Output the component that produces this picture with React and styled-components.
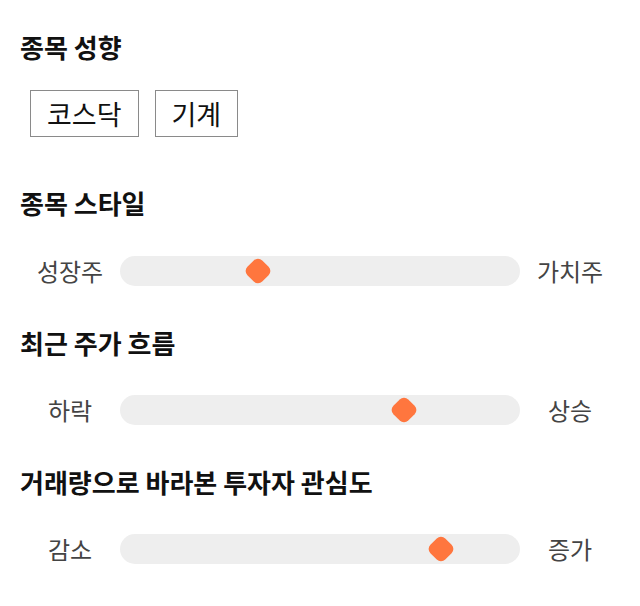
import styled, { createGlobalStyle } from 'styled-components';

const GlobalStyle = createGlobalStyle`
  body {
    margin: 0;
    background: #ffffff;
    font-family: "Noto Sans CJK KR", "Noto Sans", sans-serif;
  }
`;

const Page = styled.main`
  padding: 32px 20px 20px;
  display: flex;
  flex-direction: column;
`;

const Section = styled.section`
  margin-bottom: ${(p) => p.$gap || 42}px;
`;

const Title = styled.h2`
  margin: 0 0 ${(p) => p.$space || 38}px;
  font-size: 26px;
  line-height: 30px;
  font-weight: 700;
  color: #111111;
`;

const Chips = styled.div`
  display: flex;
  gap: 16px;
  padding-left: 10px;
`;

const Chip = styled.button`
  font-family: inherit;
  font-size: 27px;
  line-height: 45px;
  height: 47px;
  padding: 0 16px;
  background: #ffffff;
  color: #111111;
  border: 1px solid #8a8a8a;
  border-radius: 0;
`;

const SliderRow = styled.div`
  display: grid;
  grid-template-columns: 100px 1fr 100px;
  align-items: center;
  height: 30px;
`;

const Label = styled.span`
  text-align: center;
  font-size: 24px;
  line-height: 30px;
  color: #444444;
`;

const Track = styled.div`
  position: relative;
  height: 30px;
  background: #eeeeee;
  border-radius: 15px;
`;

const Thumb = styled.div`
  position: absolute;
  top: 50%;
  width: 21px;
  height: 21px;
  background: #ff763e;
  border-radius: 6px;
  transform: translate(-50%, -50%) rotate(45deg);
`;

function Slider({ left, right, value }) {
  return (
    <SliderRow>
      <Label>{left}</Label>
      <Track>
        <Thumb style={{ left: `${value}%` }} />
      </Track>
      <Label>{right}</Label>
    </SliderRow>
  );
}

export default function App() {
  return (
    <Page>
      <GlobalStyle />
      <Section $gap={51}>
        <Title $space={28}>종목 성향</Title>
        <Chips>
          <Chip>코스닥</Chip>
          <Chip>기계</Chip>
        </Chips>
      </Section>
      <Section>
        <Title>종목 스타일</Title>
        <Slider left="성장주" right="가치주" value={34.5} />
      </Section>
      <Section>
        <Title $space={37}>최근 주가 흐름</Title>
        <Slider left="하락" right="상승" value={71} />
      </Section>
      <Section>
        <Title $space={37}>거래량으로 바라본 투자자 관심도</Title>
        <Slider left="감소" right="증가" value={80.25} />
      </Section>
    </Page>
  );
}
